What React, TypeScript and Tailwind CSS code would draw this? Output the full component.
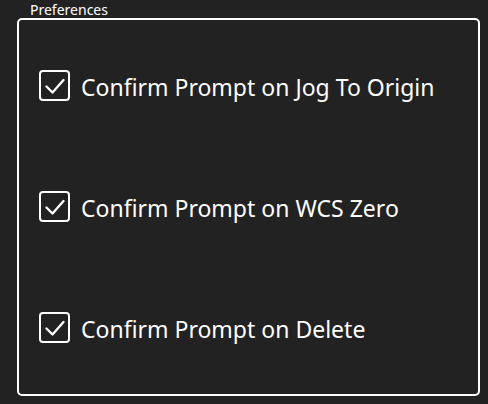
import { useState } from "react";

const prefs = [
  "Confirm Prompt on Jog To Origin",
  "Confirm Prompt on WCS Zero",
  "Confirm Prompt on Delete",
];

function CheckBox({ checked, onToggle, label }: { checked: boolean; onToggle: () => void; label: string }) {
  return (
    <label className="flex cursor-pointer items-center gap-[11px]" onClick={onToggle}>
      <span className="grid h-[31px] w-[31px] shrink-0 place-items-center rounded-[4px] border-2 border-white">
        {checked && (
          <svg viewBox="0 0 20 16" className="h-[16px] w-[20px]" fill="none" stroke="white" strokeWidth="2.3" strokeLinecap="round" strokeLinejoin="round">
            <path d="M1.5 8.5 L7.5 14.5 L18.5 2" />
          </svg>
        )}
      </span>
      <span className="pt-[3px] text-[23px] leading-none text-white">{label}</span>
    </label>
  );
}

export default function App() {
  const [values, setValues] = useState([true, true, true]);

  return (
    <div className="h-[404px] w-[488px] bg-[#222222] pl-[17px] pt-[18px] font-['Noto_Sans',sans-serif]">
      <div className="relative h-[378px] w-[463px] rounded-[5px] border-2 border-white">
        <span className="absolute left-[8px] top-[-18px] bg-[#222222] px-[3px] text-[14px] leading-[16px] text-white">
          Preferences
        </span>
        <div className="flex flex-col gap-[90px] pl-[20px] pt-[50px]">
          {prefs.map((p, i) => (
            <CheckBox
              key={p}
              label={p}
              checked={values[i]}
              onToggle={() => setValues((v) => v.map((x, j) => (j === i ? !x : x)))}
            />
          ))}
        </div>
      </div>
    </div>
  );
}
